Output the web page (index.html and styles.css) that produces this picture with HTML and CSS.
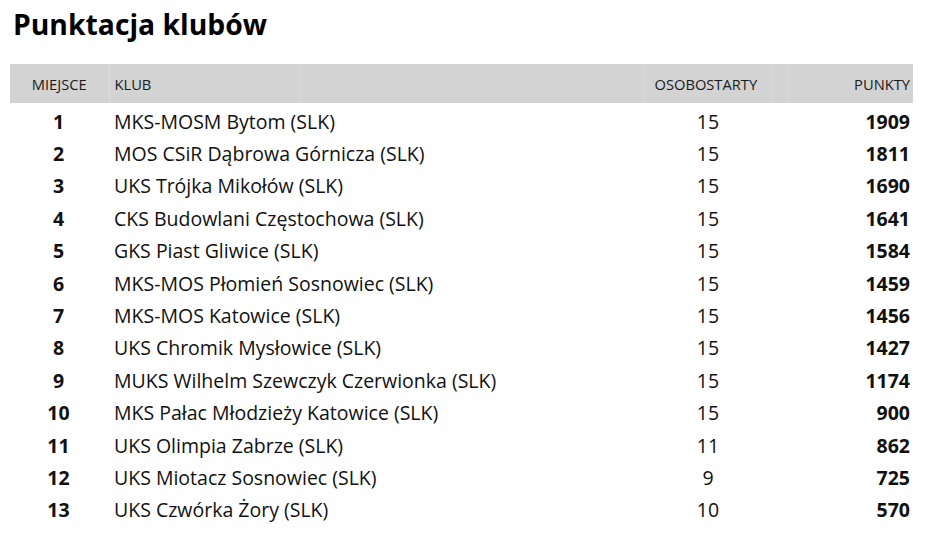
FILE: index.html
```html
<!DOCTYPE html>
<html lang="pl">
<head>
<meta charset="utf-8">
<title>Punktacja klubów</title>
<link rel="stylesheet" href="styles.css">
</head>
<body>
<h1 class="title">Punktacja klubów</h1>
<table class="ranking">
  <colgroup>
    <col class="c-place"><col class="c-club"><col class="c-gap"><col class="c-starts"><col class="c-gap2"><col class="c-points">
  </colgroup>
  <thead>
    <tr>
      <th class="place">MIEJSCE</th>
      <th class="club">KLUB</th>
      <th></th>
      <th class="starts">OSOBOSTARTY</th>
      <th></th>
      <th class="points">PUNKTY</th>
    </tr>
  </thead>
  <tbody>
    <tr><td class="place">1</td><td class="club" colspan="2">MKS-MOSM Bytom (SLK)</td><td class="starts">15</td><td></td><td class="points">1909</td></tr>
    <tr><td class="place">2</td><td class="club" colspan="2">MOS CSiR Dąbrowa Górnicza (SLK)</td><td class="starts">15</td><td></td><td class="points">1811</td></tr>
    <tr><td class="place">3</td><td class="club" colspan="2">UKS Trójka Mikołów (SLK)</td><td class="starts">15</td><td></td><td class="points">1690</td></tr>
    <tr><td class="place">4</td><td class="club" colspan="2">CKS Budowlani Częstochowa (SLK)</td><td class="starts">15</td><td></td><td class="points">1641</td></tr>
    <tr><td class="place">5</td><td class="club" colspan="2">GKS Piast Gliwice (SLK)</td><td class="starts">15</td><td></td><td class="points">1584</td></tr>
    <tr><td class="place">6</td><td class="club" colspan="2">MKS-MOS Płomień Sosnowiec (SLK)</td><td class="starts">15</td><td></td><td class="points">1459</td></tr>
    <tr><td class="place">7</td><td class="club" colspan="2">MKS-MOS Katowice (SLK)</td><td class="starts">15</td><td></td><td class="points">1456</td></tr>
    <tr><td class="place">8</td><td class="club" colspan="2">UKS Chromik Mysłowice (SLK)</td><td class="starts">15</td><td></td><td class="points">1427</td></tr>
    <tr><td class="place">9</td><td class="club" colspan="2">MUKS Wilhelm Szewczyk Czerwionka (SLK)</td><td class="starts">15</td><td></td><td class="points">1174</td></tr>
    <tr><td class="place">10</td><td class="club" colspan="2">MKS Pałac Młodzieży Katowice (SLK)</td><td class="starts">15</td><td></td><td class="points">900</td></tr>
    <tr><td class="place">11</td><td class="club" colspan="2">UKS Olimpia Zabrze (SLK)</td><td class="starts">11</td><td></td><td class="points">862</td></tr>
    <tr><td class="place">12</td><td class="club" colspan="2">UKS Miotacz Sosnowiec (SLK)</td><td class="starts">9</td><td></td><td class="points">725</td></tr>
    <tr><td class="place">13</td><td class="club" colspan="2">UKS Czwórka Żory (SLK)</td><td class="starts">10</td><td></td><td class="points">570</td></tr>
  </tbody>
</table>
</body>
</html>
```

FILE: styles.css
```css
html, body {
  margin: 0;
  padding: 0;
  background: #ffffff;
}
body {
  font-family: "Open Sans", "Noto Sans", "DejaVu Sans", sans-serif;
  color: #111111;
  padding: 6px 0 0 10px;
}
.title {
  margin: 0 0 0 3px;
  font-size: 28.3px;
  font-weight: 700;
  line-height: 36px;
  color: #000;
}
.ranking {
  margin-top: 22px;
  width: 903px;
  border-collapse: collapse;
  table-layout: fixed;
}
.c-place { width: 99px; }
.c-club { width: 190px; }
.c-gap { width: 344px; }
.c-starts { width: 128px; }
.c-gap2 { width: 17px; }
.c-points { width: 125px; }
.ranking th {
  background: #d3d3d3;
  font-weight: 400;
  font-size: 14.7px;
  height: 39px;
  padding: 0;
  color: #1a1a1a;
  border-left: 1px solid #dcdcdc;
}
.ranking th:first-child { border-left: none; }
.ranking td {
  font-size: 19.5px;
  height: 32.4px;
  padding: 0;
  color: #111;
}
.ranking .place { text-align: center; }
.ranking td.place { font-weight: 700; padding-right: 2px; }
.ranking .club { text-align: left; padding-left: 5px; }
.ranking .starts { text-align: center; padding-left: 2px; }
.ranking th.starts { text-align: left; padding-left: 11px; }
.ranking .points { text-align: right; padding-right: 3px; }
.ranking td.points { font-weight: 700; }
.ranking tbody tr:first-child td { padding-top: 2px; }
```
